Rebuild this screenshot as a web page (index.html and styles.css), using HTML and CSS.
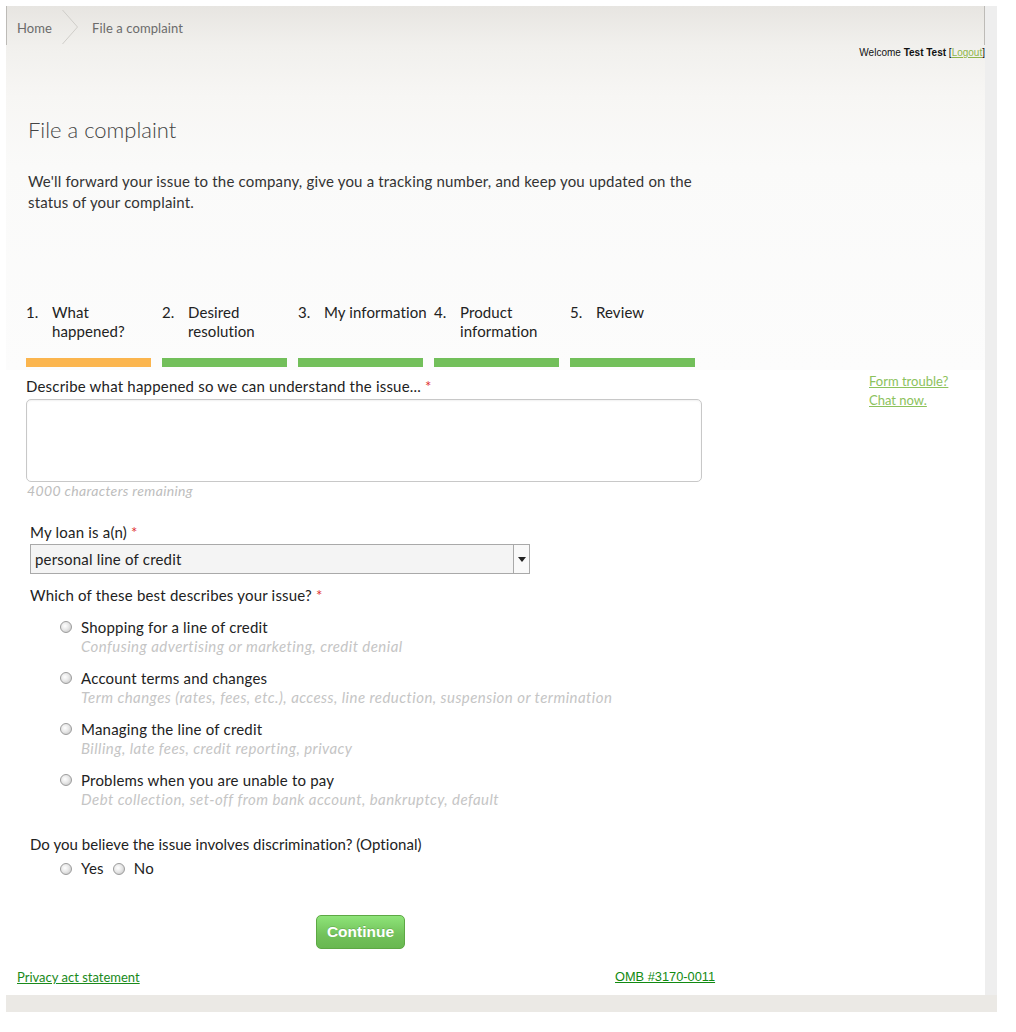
FILE: index.html
```html
<!DOCTYPE html>
<html lang="en">
<head>
<meta charset="utf-8">
<title>File a complaint</title>
<link rel="stylesheet" href="styles.css">
</head>
<body>
<div class="frame">
  <div class="sheet">
    <div class="header">
      <div class="crumbs">
        <span class="crumb">Home</span>
        <svg class="chev" width="16" height="39" viewBox="0 0 16 39"><path d="M0.5 4 L15.5 21 L0.5 38" fill="none" stroke="#cfcdc9" stroke-width="1"/></svg>
        <span class="crumb current">File a complaint</span>
      </div>
      <div class="welcome">Welcome <b>Test Test</b> [<a href="#" class="logout">Logout</a>]</div>
      <h1 class="title">File a complaint</h1>
      <p class="intro">We'll forward your issue to the company, give you a tracking number, and keep you updated on the status of your complaint.</p>
      <ol class="steps">
        <li class="step active"><div class="step-text"><span class="num">1.</span><span class="lbl">What<br>happened?</span></div><div class="bar"></div></li>
        <li class="step"><div class="step-text"><span class="num">2.</span><span class="lbl">Desired<br>resolution</span></div><div class="bar"></div></li>
        <li class="step"><div class="step-text"><span class="num">3.</span><span class="lbl">My information</span></div><div class="bar"></div></li>
        <li class="step"><div class="step-text"><span class="num">4.</span><span class="lbl">Product<br>information</span></div><div class="bar"></div></li>
        <li class="step"><div class="step-text"><span class="num">5.</span><span class="lbl">Review</span></div><div class="bar"></div></li>
      </ol>
    </div>
    <div class="content">
      <div class="form">
        <div class="describe">Describe what happened so we can understand the issue... <span class="req">*</span></div>
        <div class="textarea"></div>
        <div class="remaining">4000 characters remaining</div>
        <div class="q q-loan">My loan is a(n) <span class="req">*</span></div>
        <div class="select"><span class="select-val">personal line of credit</span><span class="select-btn"><svg width="8" height="5" viewBox="0 0 8 5"><path d="M0 0 H8 L4 5 Z" fill="#222"/></svg></span></div>
        <div class="q q-issue">Which of these best describes your issue? <span class="req">*</span></div>
        <ul class="options">
          <li class="opt"><span class="radio"></span><div><div class="opt-lbl">Shopping for a line of credit</div><div class="opt-desc">Confusing advertising or marketing, credit denial</div></div></li>
          <li class="opt"><span class="radio"></span><div><div class="opt-lbl">Account terms and changes</div><div class="opt-desc">Term changes (rates, fees, etc.), access, line reduction, suspension or termination</div></div></li>
          <li class="opt"><span class="radio"></span><div><div class="opt-lbl">Managing the line of credit</div><div class="opt-desc">Billing, late fees, credit reporting, privacy</div></div></li>
          <li class="opt"><span class="radio"></span><div><div class="opt-lbl">Problems when you are unable to pay</div><div class="opt-desc">Debt collection, set-off from bank account, bankruptcy, default</div></div></li>
        </ul>
        <div class="q q-disc">Do you believe the issue involves discrimination? (Optional)</div>
        <div class="yesno"><span class="radio"></span><span class="yn">Yes</span><span class="radio"></span><span class="yn">No</span></div>
        <div class="btn-row"><button class="continue">Continue</button></div>
      </div>
      <div class="aside">
        <a href="#" class="chat">Form trouble?</a>
        <a href="#" class="chat">Chat now.</a>
      </div>
    </div>
    <div class="footer">
      <a href="#" class="privacy">Privacy act statement</a>
      <a href="#" class="omb">OMB #3170-0011</a>
    </div>
  </div>
  <div class="rstrip"></div>
  <div class="bstrip"></div>
</div>
</body>
</html>
```
FILE: styles.css
```css
* { box-sizing: border-box; }
html, body { margin: 0; padding: 0; background: #fff; }
body {
  padding: 6px 0 0 6px;
  font-family: Lato, "Open Sans", sans-serif;
  color: #222;
}
.frame {
  display: grid;
  grid-template-columns: 979px 12px;
  grid-template-rows: 989px 17px;
  width: 991px;
}
.sheet { background: #fff; height: 989px; display: flex; flex-direction: column; }
.rstrip { background: #eeeeee; }
.bstrip { grid-column: 1 / 3; background: #ebe9e5; }

.header {
  height: 364px;
  background: linear-gradient(#e7e5e1 0px, #f1f0ed 40px, #f7f6f4 90px, #fafaf9 160px, #fcfcfc 364px);
}
.crumbs {
  height: 39px;
  display: flex;
  align-items: flex-start;
  border-left: 1px solid #bdbbb7;
  border-right: 1px solid #bdbbb7;
}
.crumb {
  font-size: 13px;
  line-height: 16px;
  color: #6b6b6b;
  padding-top: 14px;
  letter-spacing: 0.1px;
}
.crumb:first-child { padding-left: 10px; }
.chev { margin: 0 14px 0 10px; display: block; }
.welcome {
  margin-top: 2px;
  font-family: "Liberation Sans", Arial, sans-serif;
  font-size: 10px;
  line-height: 12px;
  text-align: right;
  color: #111;
}
.logout { color: #8fb54a; }
.title {
  margin: 57px 0 0 22px;
  font-size: 22px;
  line-height: 28px;
  font-weight: 300;
  color: #444;
}
.intro {
  margin: 27px 0 0 22px;
  width: 690px;
  font-size: 15px;
  line-height: 21px;
  color: #333;
  letter-spacing: 0.18px;
}
.steps {
  list-style: none;
  margin: 90px 0 0 20px;
  padding: 0;
  display: flex;
}
.step { width: 136px; }
.step-text { display: flex; font-size: 15px; line-height: 19px; height: 38px; color: #222; letter-spacing: 0.1px; }
.num { width: 26px; flex: none; }
.lbl { white-space: nowrap; }
.bar { margin-top: 17px; width: 125px; height: 9px; background: #72bf5a; }
.step.active .bar { background: #fbb54e; }

.content { display: flex; flex: 1; }
.form { width: 863px; padding-left: 20px; letter-spacing: 0.2px; }
.describe { margin-top: 7px; font-size: 15px; line-height: 19px; }
.req { color: #e03030; }
.textarea {
  margin-top: 3px;
  width: 676px;
  height: 83px;
  border: 1px solid #c8c8c8;
  border-radius: 5px;
  box-shadow: inset 0 1px 2px rgba(0,0,0,0.06);
  background: #fff;
}
.remaining { font-size: 14px; line-height: 18px; font-style: italic; color: #bdbdbd; padding-left: 1px; letter-spacing: 0.35px; }
.q { font-size: 15px; line-height: 19px; padding-left: 4px; }
.q-loan { margin-top: 23px; }
.select {
  margin: 2px 0 0 4px;
  width: 500px;
  height: 30px;
  border: 1px solid #a9a9a9;
  background: #f4f4f4;
  display: flex;
  align-items: center;
}
.select-val { flex: 1; padding-left: 4px; font-size: 15px; }
.select-btn {
  width: 16px;
  height: 28px;
  border-left: 1px solid #a9a9a9;
  display: flex;
  align-items: center;
  justify-content: center;
  background: #f9f9f9;
}
.q-issue { margin-top: 12px; }
.options { list-style: none; margin: 13px 0 0 34px; padding: 0; }
.opt { display: flex; align-items: flex-start; margin-bottom: 13px; }
.opt:last-child { margin-bottom: 0; }
.opt .radio { margin-top: 3px; }
.opt-lbl { font-size: 15px; line-height: 19px; }
.opt-desc { font-size: 15px; line-height: 19px; font-style: italic; color: #c5c5c5; letter-spacing: 0.45px; }
.radio {
  width: 12px;
  height: 12px;
  flex: none;
  border-radius: 50%;
  border: 1px solid #9c9c9c;
  background: radial-gradient(circle at 40% 40%, #ffffff 0, #e8e8e8 45%, #bdbdbd 100%);
  margin-right: 9px;
  display: inline-block;
}
.q-disc { margin-top: 26px; letter-spacing: 0.05px; }
.yesno { margin: 5px 0 0 34px; display: flex; align-items: center; font-size: 15px; line-height: 19px; }
.yn { margin-right: 9px; }
.btn-row { margin: 37px 0 0 290px; }
.continue {
  width: 89px;
  height: 34px;
  border: 1px solid #5da844;
  border-radius: 5px;
  background: linear-gradient(#8ee479, #72c15a 60%, #68b850);
  color: #fff;
  font-family: "Liberation Sans", Arial, sans-serif;
  font-weight: bold;
  font-size: 15.5px;
  letter-spacing: 0;
  text-shadow: 0 -1px 0 rgba(0,0,0,0.15);
  padding: 0;
}
.aside { padding-top: 2px; display: flex; flex-direction: column; align-items: flex-start; }
.chat { font-size: 13px; line-height: 19px; color: #8cc25c; }
.footer {
  height: 25px;
  display: flex;
  align-items: flex-start;
  padding-left: 11px;
}
.privacy { font-size: 13px; line-height: 14px; color: #1a8a1a; width: 598px; }
.omb { font-family: "Liberation Sans", Arial, sans-serif; font-size: 12.8px; line-height: 14px; color: #118a11; }
```
